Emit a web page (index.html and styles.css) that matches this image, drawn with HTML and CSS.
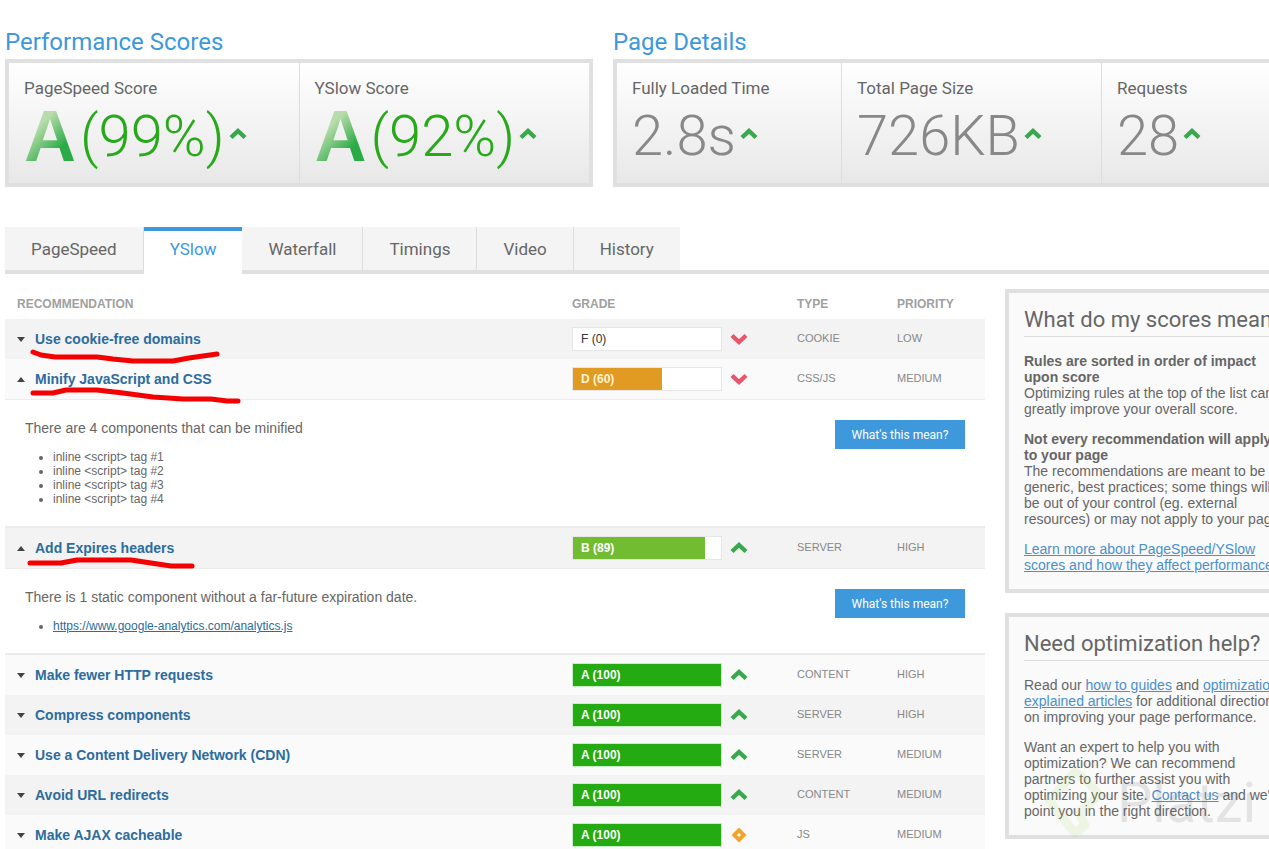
FILE: index.html
```html
<!DOCTYPE html>
<html lang="en">
<head>
<meta charset="utf-8">
<title>Performance Report</title>
<link rel="stylesheet" href="styles.css">
</head>
<body>
<svg class="symbols" aria-hidden="true">
  <symbol id="up" viewBox="0 0 18 12"><path d="M2 9.5 9 3 16 9.5" fill="none" stroke="#37a84c" stroke-width="4.4"/></symbol>
  <symbol id="down" viewBox="0 0 18 12"><path d="M2 2.5 9 9 16 2.5" fill="none" stroke="#e8566b" stroke-width="4.4"/></symbol>
  <symbol id="diamond" viewBox="0 0 16 16"><path d="M8 0.5 15.5 8 8 15.5 0.5 8Z" fill="#f2a32c"/><path d="M8 6 10 8 8 10 6 8Z" fill="#fff"/></symbol>
</svg>
<div class="page">
  <div class="summary">
    <section class="scores">
      <h2>Performance Scores</h2>
      <div class="panel">
        <div class="cell">
          <h3>PageSpeed Score</h3>
          <div class="value good"><span class="letter">A</span><span class="number">(99%)</span><svg class="trend"><use href="#up"/></svg></div>
        </div>
        <div class="cell">
          <h3>YSlow Score</h3>
          <div class="value good"><span class="letter">A</span><span class="number">(92%)</span><svg class="trend"><use href="#up"/></svg></div>
        </div>
      </div>
    </section>
    <section class="details">
      <h2>Page Details</h2>
      <div class="panel">
        <div class="cell time">
          <h3>Fully Loaded Time</h3>
          <div class="value"><span class="number">2.8s</span><svg class="trend"><use href="#up"/></svg></div>
        </div>
        <div class="cell size">
          <h3>Total Page Size</h3>
          <div class="value"><span class="number">726KB</span><svg class="trend"><use href="#up"/></svg></div>
        </div>
        <div class="cell">
          <h3>Requests</h3>
          <div class="value"><span class="number">28</span><svg class="trend"><use href="#up"/></svg></div>
        </div>
      </div>
    </section>
  </div>

  <nav class="tabs">
    <a href="#">PageSpeed</a>
    <a href="#" class="active" aria-current="page">YSlow</a>
    <a href="#">Waterfall</a>
    <a href="#">Timings</a>
    <a href="#">Video</a>
    <a href="#">History</a>
  </nav>

  <div class="content">
    <main>
      <table class="rules">
        <colgroup><col><col class="col-grade"><col class="col-type"><col class="col-priority"></colgroup>
        <thead>
          <tr><th class="name">RECOMMENDATION</th><th>GRADE</th><th>TYPE</th><th>PRIORITY</th></tr>
        </thead>
        <tbody>
          <tr class="rule odd">
            <td class="name"><a href="#" class="closed">Use cookie-free domains</a>
              <svg class="mark" width="245" height="50"><path d="M28 33 36 36 50 38 92 38 108 40 128 42 168 42 184 39 198 37 212 35"/></svg></td>
            <td><div class="grade"><div class="bar none"><span style="width:0%">F (0)</span></div><svg class="icon"><use href="#down"/></svg></div></td>
            <td>COOKIE</td><td>LOW</td>
          </tr>
          <tr class="rule even open">
            <td class="name"><a href="#" class="opened">Minify JavaScript and CSS</a>
              <svg class="mark" width="245" height="50"><path d="M28 34 48 34 61 31 92 31 118 34 148 38 178 40 206 40 222 42 233 42"/></svg></td>
            <td><div class="grade"><div class="bar d"><span style="width:60%">D (60)</span></div><svg class="icon"><use href="#down"/></svg></div></td>
            <td>CSS/JS</td><td>MEDIUM</td>
          </tr>
          <tr class="more">
            <td colspan="4"><div class="explain"><div>
              <p>There are 4 components that can be minified</p>
              <ul><li>inline &lt;script&gt; tag #1</li><li>inline &lt;script&gt; tag #2</li><li>inline &lt;script&gt; tag #3</li><li>inline &lt;script&gt; tag #4</li></ul>
            </div><button type="button">What's this mean?</button></div></td>
          </tr>
          <tr class="rule odd open">
            <td class="name"><a href="#" class="opened">Add Expires headers</a>
              <svg class="mark" width="245" height="50"><path d="M25 35 56 35 72 32 126 32 146 35 166 38 187 38"/></svg></td>
            <td><div class="grade"><div class="bar b"><span style="width:89%">B (89)</span></div><svg class="icon"><use href="#up"/></svg></div></td>
            <td>SERVER</td><td>HIGH</td>
          </tr>
          <tr class="more">
            <td colspan="4"><div class="explain"><div>
              <p>There is 1 static component without a far-future expiration date.</p>
              <ul><li><a href="#">https://www.google-analytics.com/analytics.js</a></li></ul>
            </div><button type="button">What's this mean?</button></div></td>
          </tr>
          <tr class="rule even">
            <td class="name"><a href="#" class="closed">Make fewer HTTP requests</a></td>
            <td><div class="grade"><div class="bar a"><span style="width:100%">A (100)</span></div><svg class="icon"><use href="#up"/></svg></div></td>
            <td>CONTENT</td><td>HIGH</td>
          </tr>
          <tr class="rule odd">
            <td class="name"><a href="#" class="closed">Compress components</a></td>
            <td><div class="grade"><div class="bar a"><span style="width:100%">A (100)</span></div><svg class="icon"><use href="#up"/></svg></div></td>
            <td>SERVER</td><td>HIGH</td>
          </tr>
          <tr class="rule even">
            <td class="name"><a href="#" class="closed">Use a Content Delivery Network (CDN)</a></td>
            <td><div class="grade"><div class="bar a"><span style="width:100%">A (100)</span></div><svg class="icon"><use href="#up"/></svg></div></td>
            <td>SERVER</td><td>MEDIUM</td>
          </tr>
          <tr class="rule odd">
            <td class="name"><a href="#" class="closed">Avoid URL redirects</a></td>
            <td><div class="grade"><div class="bar a"><span style="width:100%">A (100)</span></div><svg class="icon"><use href="#up"/></svg></div></td>
            <td>CONTENT</td><td>MEDIUM</td>
          </tr>
          <tr class="rule even">
            <td class="name"><a href="#" class="closed">Make AJAX cacheable</a></td>
            <td><div class="grade"><div class="bar a"><span style="width:100%">A (100)</span></div><svg class="icon tall"><use href="#diamond"/></svg></div></td>
            <td>JS</td><td>MEDIUM</td>
          </tr>
        </tbody>
      </table>
    </main>

    <aside>
      <section class="card">
        <h4>What do my scores mean?</h4>
        <p><strong>Rules are sorted in order of impact upon score</strong><br>Optimizing rules at the top of the list can greatly improve your overall score.</p>
        <p><strong>Not every recommendation will apply to your page</strong><br>The recommendations are meant to be generic, best practices; some things will be out of your control (eg. external resources) or may not apply to your page.</p>
        <p><a href="#">Learn more about PageSpeed/YSlow scores and how they affect performance</a></p>
      </section>
      <section class="card">
        <h4>Need optimization help?</h4>
        <p>Read our <a href="#">how to guides</a> and <a href="#">optimization explained articles</a> for additional directions on improving your page performance.</p>
        <p>Want an expert to help you with optimization? We can recommend partners to further assist you with optimizing your site. <a href="#">Contact us</a> and we'll point you in the right direction.</p>
        <div class="watermark">
          <svg width="62" height="72" viewBox="0 0 62 72"><path d="M46 16 32 5 6 34 32 66 42 58 36 46 56 28 46 16" fill="none" stroke="#9bd34a" stroke-width="9" stroke-linejoin="round"/></svg>
          <span>Platzi</span>
        </div>
      </section>
    </aside>
  </div>
</div>
</body>
</html>
```
FILE: styles.css
```css
* { box-sizing: border-box; }
body {
  margin: 0;
  overflow-x: hidden;
  background: #fff;
  color: #666;
  font: 14px/16px "Liberation Sans", Arial, sans-serif;
}
h2, h3, h4, p, ul { margin: 0; padding: 0; }
.symbols { display: none; }
.page { min-width: 1305px; padding: 26px 0 0 5px; }

.summary { display: flex; gap: 20px; }
.scores { flex: 588 1 0; }
.details { flex: 692 1 0; }
h2, h3, h4, .number, .tabs, button { font-family: Roboto, sans-serif; font-weight: 400; }
h2 { color: #3d98dc; font-size: 24px; line-height: 33px; }
.panel {
  display: flex;
  border: 4px solid #e0e0e0;
  background: linear-gradient(#fff, #e8e8e8);
}
.cell { flex: 1; height: 120px; padding: 15px; border-left: 1px solid #ddd; }
.cell:first-child { border-left: 0; }
.cell.time { flex: 0 0 224px; }
.cell.size { flex: 0 0 260px; }
h3 { font-size: 17px; line-height: 20px; }
.value { display: flex; align-items: center; height: 72px; color: #888; }
.good { color: #27a91a; }
.number { padding-top: 4px; font-size: 56px; line-height: 72px; font-weight: 350; }
.good .number { font-size: 58px; }
.letter {
  padding-top: 4px;
  font-size: 72px;
  line-height: 72px;
  font-weight: bold;
  margin-right: 4px;
  color: transparent;
  background: linear-gradient(135deg, #b8dcab 35%, #2aab46 70%);
  background-clip: text;
  -webkit-background-clip: text;
}
.trend { width: 18px; height: 12px; margin-left: 4px; }

.tabs { display: flex; margin-top: 40px; border-bottom: 4px solid #e0e0e0; font-size: 17px; }
.tabs a {
  height: 43px;
  padding: 0 26px;
  line-height: 45px;
  background: #f4f4f4;
  border-right: 1px solid #ddd;
  color: #666;
  text-decoration: none;
}
.tabs a:last-child { border-right: 0; }
.tabs .active {
  height: 47px;
  margin-bottom: -4px;
  border-top: 4px solid #3d98dc;
  border-right: 0;
  line-height: 37px;
  background: #fff;
  color: #3d98dc;
}

.content { display: flex; align-items: flex-start; gap: 20px; padding-top: 15px; }
main { flex: 1; }
.rules { width: 100%; border-collapse: separate; border-spacing: 0; table-layout: fixed; }
.col-grade { width: 225px; }
.col-type { width: 100px; }
.col-priority { width: 88px; }
td, th { padding: 0; text-align: left; }
th { height: 30px; font-size: 12px; color: #a0a0a0; }
th.name { padding-left: 12px; }
.rule td { height: 40px; padding-bottom: 2px; font-size: 11px; color: #888; }
.rule .name { position: relative; padding: 0 0 0 12px; }
.odd { background: #f3f3f3; }
.even { background: #fafafa; }
.open td { height: 41px; border-bottom: 1px solid #ececec; }
.name a {
  display: flex;
  align-items: center;
  gap: 10px;
  color: #2c6c9e;
  font-size: 14px;
  font-weight: bold;
  text-decoration: none;
}
.name a::before { content: ""; border: 0 solid transparent; border-width: 0 4px; }
.name .closed::before { border-top: 5px solid #444; }
.name .opened::before { border-bottom: 5px solid #444; }
.mark { position: absolute; left: 0; top: 0; overflow: visible; pointer-events: none; z-index: 1; }
.mark path { fill: none; stroke: #f50000; stroke-width: 5; stroke-linecap: round; stroke-linejoin: round; }
.grade { display: flex; align-items: center; gap: 8px; padding-top: 2px; }
.bar { width: 150px; height: 24px; border: 1px solid #e6e6e6; background: #fff; }
.bar span {
  display: block;
  height: 22px;
  padding-left: 8px;
  line-height: 22px;
  font-size: 12px;
  font-weight: bold;
  color: #fff;
  white-space: nowrap;
}
.bar.none span { color: #333; font-weight: normal; }
.bar.d span { background: #e29b22; color: #fff4cf; }
.bar.b span { background: #71bc31; }
.bar.a { border-color: #c9efc6; }
.bar.a span { background: #25ab12; }
.icon { width: 18px; height: 12px; }
.icon.tall { height: 16px; }
.more > td { border-bottom: 2px solid #ececec; }
.explain { display: flex; justify-content: space-between; align-items: flex-start; padding: 20px; }
.explain ul { margin-top: 14px; padding-left: 28px; font-size: 12px; line-height: 14px; }
.explain ul a { color: #2c6c9e; }
button {
  width: 130px;
  height: 29px;
  padding: 0;
  border: 0;
  background: #3d98dc;
  color: #fff;
  font-size: 12px;
}

aside { flex: 0 0 300px; display: flex; flex-direction: column; gap: 20px; }
.card { position: relative; padding: 16px 15px; border: 4px solid #e0e0e0; background: #fafafa; }
h4 { padding-bottom: 5px; border-bottom: 1px solid #ddd; font-size: 22px; line-height: 22px; white-space: nowrap; }
.card p { margin-top: 14px; }
.card h4 + p { margin-top: 16px; }
.card a { color: #4a90cc; }
.watermark { position: absolute; left: 34px; bottom: -4px; display: flex; align-items: center; gap: 12px; opacity: 0.12; pointer-events: none; }
.watermark span { font: 56px/72px Roboto, sans-serif; color: #444; }
```
